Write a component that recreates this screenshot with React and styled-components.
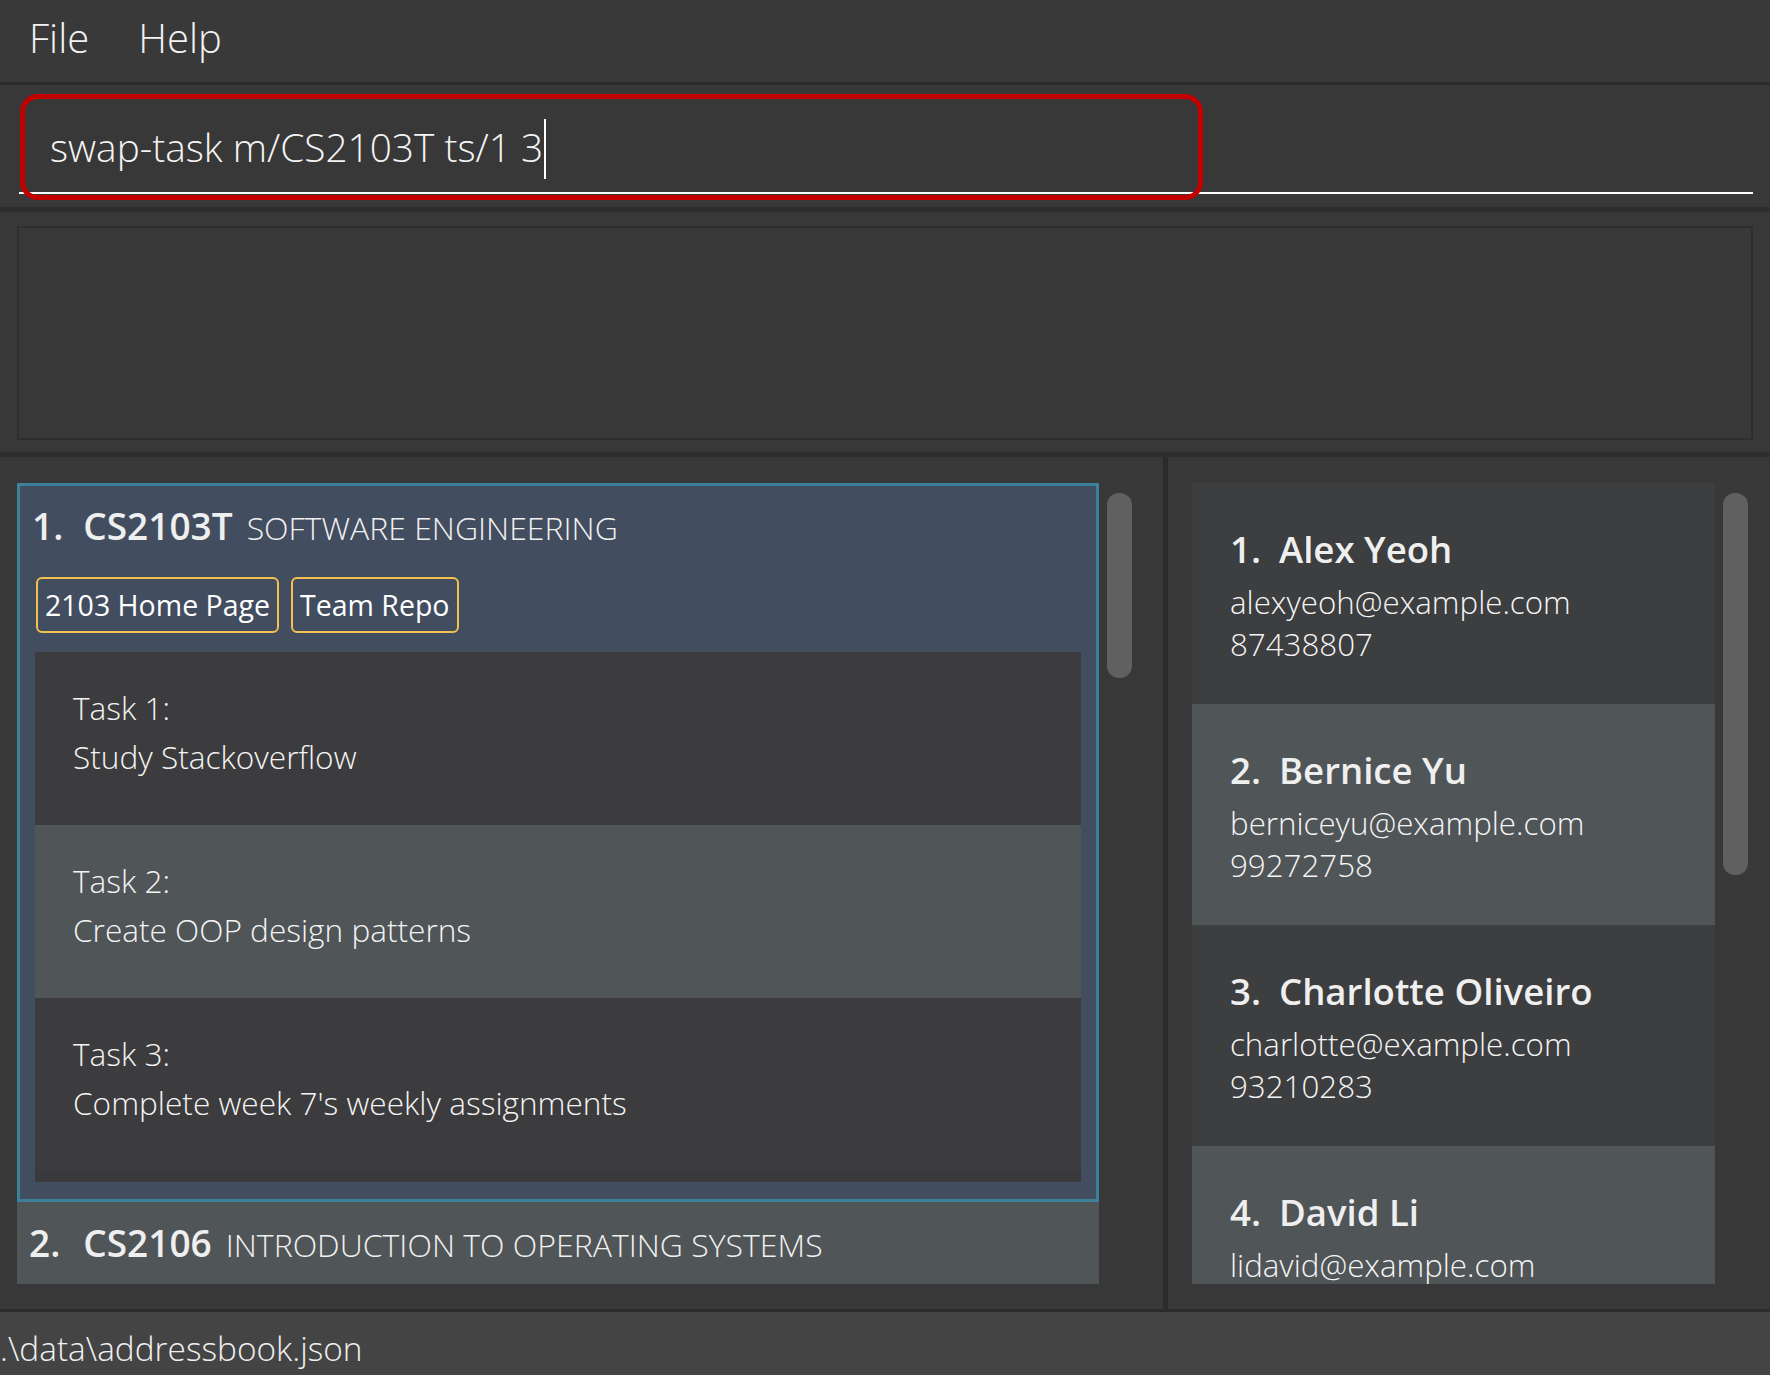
import React from 'react';
import styled, { createGlobalStyle } from 'styled-components';

const GlobalStyle = createGlobalStyle`
  html, body { margin: 0; padding: 0; background: #383838; }
  body { font-family: "Open Sans", "Noto Sans", sans-serif; color: #ffffff; }
  * { box-sizing: border-box; }
`;

const Window = styled.div`
  width: 1770px;
  height: 1375px;
  display: flex;
  flex-direction: column;
  background: #383838;
  overflow: hidden;
`;

const MenuBar = styled.div`
  flex: none;
  height: 85px;
  display: flex;
  align-items: center;
  gap: 49px;
  padding: 0 0 8px 29px;
  background: #393939;
  border-bottom: 3px solid #2b2b2b;
`;

const MenuItem = styled.span`
  font-size: 40px;
  font-weight: 300;
  color: #f2f2f2;
`;

const CommandPane = styled.div`
  flex: none;
  position: relative;
  height: 127px;
  padding: 11px 17px 0 19px;
  border-bottom: 5px solid #2d2d2d;
`;

const TextField = styled.div`
  height: 98px;
  display: flex;
  align-items: center;
  padding: 6px 0 0 31px;
  border-bottom: 2px solid #ffffff;
  font-size: 38.8px;
  font-weight: 300;
  color: #f4f4f4;
  white-space: pre;
`;

const Caret = styled.span`
  display: inline-block;
  width: 2px;
  height: 60px;
  margin: 4px 0 0 1px;
  background: #ffffff;
`;

const Highlight = styled.div`
  position: absolute;
  left: 20px;
  top: 9px;
  width: 1183px;
  height: 106px;
  border: 5px solid #c20000;
  border-radius: 18px;
  pointer-events: none;
`;

const ResultPane = styled.div`
  flex: none;
  height: 245px;
  padding: 14px 17px 12px 17px;
  border-bottom: 5px solid #2d2d2d;
`;

const ResultBox = styled.div`
  height: 100%;
  border: 2px solid #2e2e2e;
  background: #383838;
`;

const ListsArea = styled.div`
  flex: 1;
  display: flex;
  min-height: 0;
`;

const Pane = styled.div`
  flex: ${(p) => (p.$width ? `0 0 ${p.$width}px` : '1')};
  display: flex;
  gap: 8px;
  padding: 26px 0 0 ${(p) => p.$padLeft}px;
  min-width: 0;
`;

const Divider = styled.div`
  flex: 0 0 5px;
  background: #2b2b2b;
`;

const Viewport = styled.div`
  flex: 0 0 ${(p) => p.$width}px;
  height: 801px;
  overflow: hidden;
  display: flex;
  flex-direction: column;
`;

const ScrollTrack = styled.div`
  flex: 0 0 26px;
  padding-top: 10px;
`;

const Thumb = styled.div`
  width: 25px;
  height: ${(p) => p.$height}px;
  border-radius: 12px;
  background: #606060;
`;

const ModuleCard = styled.div`
  flex: none;
  background: ${(p) => (p.$selected ? '#424d5f' : '#505558')};
  border: ${(p) => (p.$selected ? '3px solid #3a8199' : 'none')};
  padding: ${(p) => (p.$selected ? '0 15px 17px 15px' : '0 15px 0 12px')};
`;

const ModuleHeader = styled.div`
  height: ${(p) => (p.$selected ? 91 : 82)}px;
  display: flex;
  align-items: baseline;
  padding-top: ${(p) => (p.$selected ? 14 : 15)}px;
  margin-left: ${(p) => (p.$selected ? -3 : 0)}px;
  white-space: nowrap;
`;

const Index = styled.span`
  font-weight: 600;
  color: #efefef;
  margin-right: ${(p) => p.$gap}px;
`;

const HeaderIndex = styled(Index)`
  font-size: 37px;
`;

const Code = styled.span`
  font-size: 37px;
  font-weight: 600;
  color: #efefef;
  margin-right: 14px;
`;

const Title = styled.span`
  font-size: 32px;
  font-weight: 300;
  color: #f0f0f0;
  text-transform: uppercase;
`;

const Tags = styled.div`
  display: flex;
  gap: 12px;
  margin-left: 1px;
`;

const Tag = styled.span`
  height: 56px;
  display: flex;
  align-items: center;
  padding: 0 7px;
  border: 2px solid #f2c14e;
  border-radius: 6px;
  font-size: 28.5px;
  font-weight: 400;
  color: #ffffff;
`;

const TaskList = styled.div`
  margin-top: 19px;
  background: #3a3a3c;
  padding-bottom: 11px;
`;

const TaskCell = styled.div`
  height: 173px;
  padding: 31px 0 0 38px;
  background: ${(p) => (p.$alt ? '#505558' : '#3c3c3e')};
  font-size: 31.6px;
  font-weight: 300;
  line-height: 49px;
  color: #f4f4f4;
`;

const PersonCard = styled.div`
  flex: none;
  height: 221px;
  padding: 38px 0 0 38px;
  background: ${(p) => (p.$alt ? '#505558' : '#3c3e40')};
`;

const PersonName = styled.div`
  display: flex;
  align-items: baseline;
  font-size: 36.6px;
  font-weight: 600;
  line-height: 56px;
  margin-bottom: 4px;
  color: #efefef;
  white-space: nowrap;
`;

const PersonLine = styled.div`
  font-size: 31.3px;
  font-weight: 300;
  line-height: 42px;
  color: #f4f4f4;
`;

const StatusBar = styled.div`
  flex: none;
  height: 66px;
  display: flex;
  align-items: center;
  padding: 8px 0 0 0;
  background: #444444;
  border-top: 3px solid #2b2b2b;
  font-size: 33.4px;
  font-weight: 300;
  color: #f0f0f0;
`;

const tasks = [
  'Study Stackoverflow',
  'Create OOP design patterns',
  "Complete week 7's weekly assignments",
];

const persons = [
  { name: 'Alex Yeoh', email: 'alexyeoh@example.com', phone: '87438807' },
  { name: 'Bernice Yu', email: 'berniceyu@example.com', phone: '99272758' },
  { name: 'Charlotte Oliveiro', email: 'charlotte@example.com', phone: '93210283' },
  { name: 'David Li', email: 'lidavid@example.com', phone: '91031282' },
];

export default function App() {
  return (
    <Window>
      <GlobalStyle />
      <MenuBar>
        <MenuItem>File</MenuItem>
        <MenuItem>Help</MenuItem>
      </MenuBar>

      <CommandPane>
        <TextField>
          swap-task m/CS2103T ts/1 3<Caret />
        </TextField>
        <Highlight />
      </CommandPane>

      <ResultPane>
        <ResultBox />
      </ResultPane>

      <ListsArea>
        <Pane $width={1163} $padLeft={17}>
          <Viewport $width={1082}>
            <ModuleCard $selected>
              <ModuleHeader $selected>
                <HeaderIndex $gap={20}>1.</HeaderIndex>
                <Code>CS2103T</Code>
                <Title>Software Engineering</Title>
              </ModuleHeader>
              <Tags>
                <Tag>2103 Home Page</Tag>
                <Tag>Team Repo</Tag>
              </Tags>
              <TaskList>
                {tasks.map((t, i) => (
                  <TaskCell key={t} $alt={i === 1}>
                    <div>Task {i + 1}:</div>
                    <div>{t}</div>
                  </TaskCell>
                ))}
              </TaskList>
            </ModuleCard>
            <ModuleCard>
              <ModuleHeader>
                <HeaderIndex $gap={23}>2.</HeaderIndex>
                <Code>CS2106</Code>
                <Title>Introduction to Operating Systems</Title>
              </ModuleHeader>
            </ModuleCard>
          </Viewport>
          <ScrollTrack>
            <Thumb $height={185} />
          </ScrollTrack>
        </Pane>

        <Divider />

        <Pane $padLeft={24}>
          <Viewport $width={523}>
            {persons.map((p, i) => (
              <PersonCard key={p.name} $alt={i % 2 === 1}>
                <PersonName>
                  <Index $gap={18}>{i + 1}.</Index>
                  {p.name}
                </PersonName>
                <PersonLine>{p.email}</PersonLine>
                <PersonLine>{p.phone}</PersonLine>
              </PersonCard>
            ))}
          </Viewport>
          <ScrollTrack>
            <Thumb $height={382} />
          </ScrollTrack>
        </Pane>
      </ListsArea>

      <StatusBar>.\data\addressbook.json</StatusBar>
    </Window>
  );
}
